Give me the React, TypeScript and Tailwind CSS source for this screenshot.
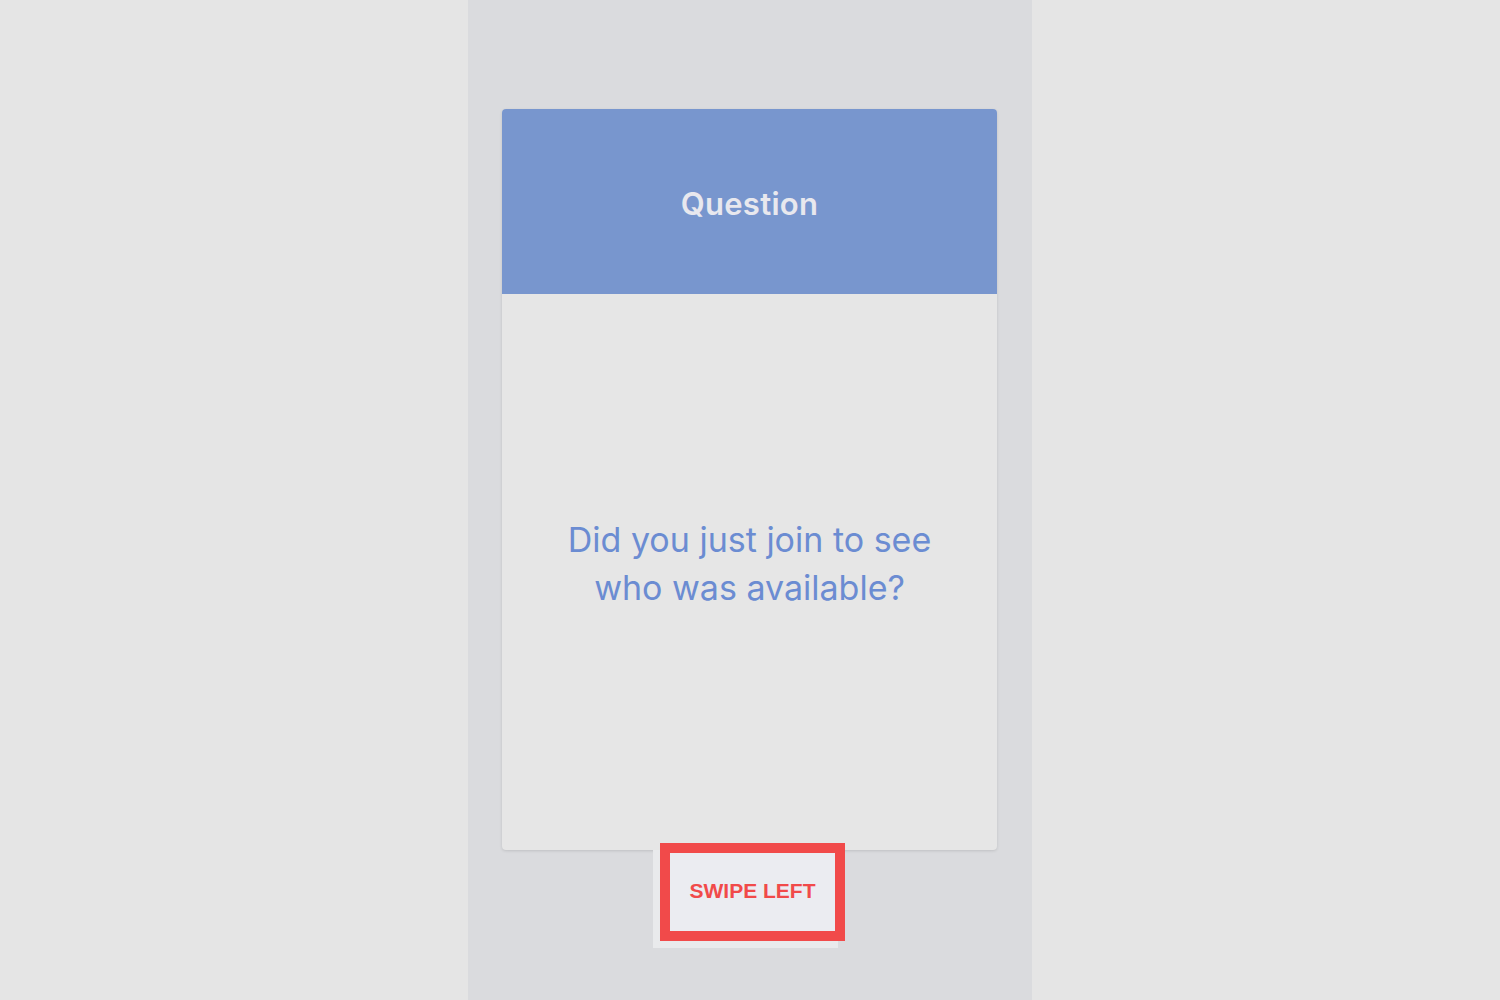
const App = () => {
  return (
    <div className="min-h-screen w-full bg-[#e5e5e5] flex justify-center">
      <div className="w-[564px] h-[1000px] bg-[#dadbde] pl-[34px] pr-[35px] pt-[109px] flex flex-col items-center">
        <div className="w-full rounded-[4px] overflow-hidden shadow-[0_1px_3px_rgba(0,0,0,0.12)] bg-[#e6e6e6]">
          <div className="h-[185px] bg-[#7896ce] flex items-center justify-center">
            <h2 className="text-[#e8e8ee] text-[31px] font-semibold tracking-[0.3px] font-['Inter',sans-serif] pt-[6px]">
              Question
            </h2>
          </div>
          <div className="h-[556px] flex items-center justify-center px-8 pb-[16px]">
            <p className="text-center text-[#6b8cd2] text-[34px] leading-[48px] font-['Inter',sans-serif]">
              Did you just join to see
              <br />
              who was available?
            </p>
          </div>
        </div>

        <div className="relative w-[185px] h-[98px] bg-[#e9eaec] ml-[-8px]">
          <div className="absolute left-[7px] top-[-7px] w-[185px] h-[98px] border-[10px] border-[#f14a4a] bg-[#ebecf1] flex items-center justify-center">
            <span className="text-[#f14a4a] text-[21px] font-bold font-['Liberation_Sans',Arial,sans-serif] pb-[2px]">
              SWIPE LEFT
            </span>
          </div>
        </div>
      </div>
    </div>
  )
}

export default App
